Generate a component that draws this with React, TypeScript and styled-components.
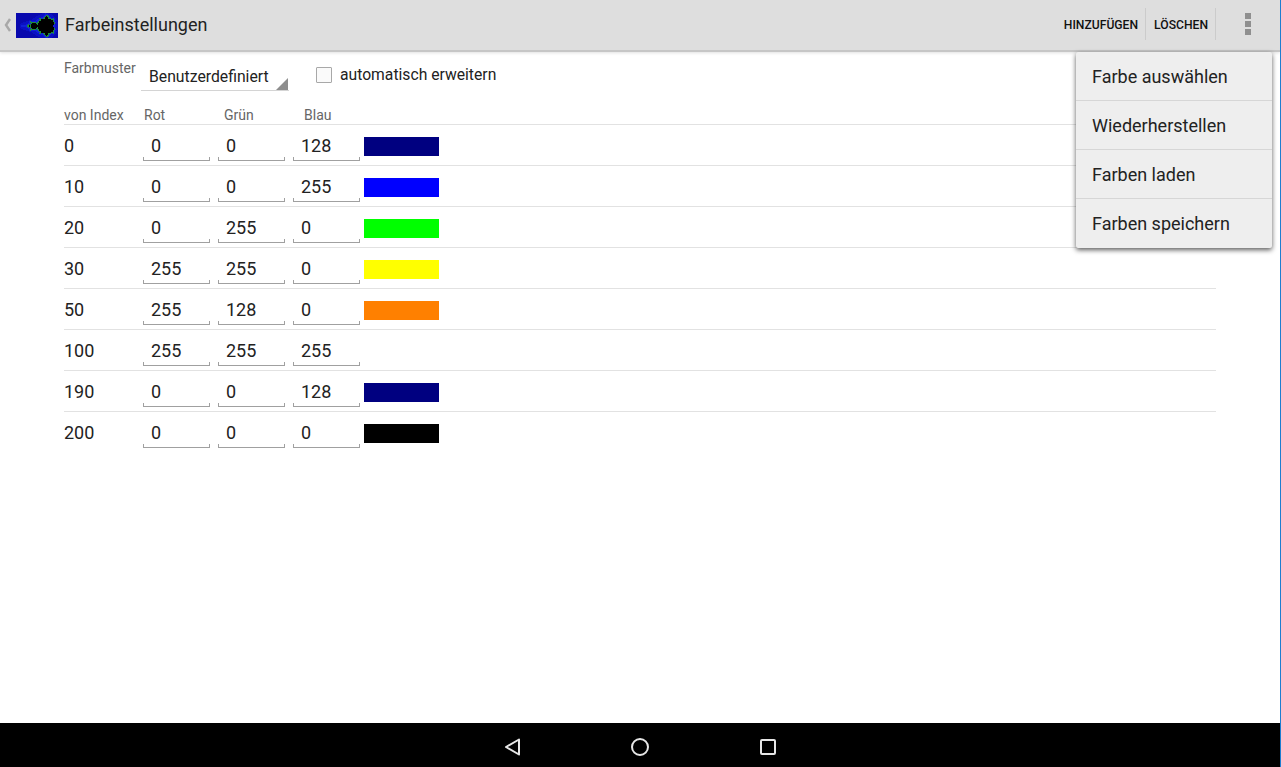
import React, { useMemo } from "react";
import styled, { createGlobalStyle } from "styled-components";

const Global = createGlobalStyle`
  html, body { margin: 0; padding: 0; background: #fff; }
  body { font-family: Roboto, "Liberation Sans", sans-serif; color: #1a1a1a; }
  * { box-sizing: border-box; }
`;

const Screen = styled.div`
  position: relative;
  width: 1281px;
  height: 767px;
  display: flex;
  flex-direction: column;
  overflow: hidden;
  background: #fff;
  border-right: 1px solid #1e7ed0;
`;

const ActionBar = styled.header`
  position: relative;
  height: 52px;
  flex: none;
  display: flex;
  align-items: center;
  background: #dedede;
  border-bottom: 2px solid #c6c6c6;
  box-shadow: 0 1px 3px rgba(0, 0, 0, 0.12);
`;

const Caret = styled.svg`
  width: 8px;
  height: 14px;
  margin-left: 4px;
  margin-right: 4px;
`;

const Logo = styled.svg`
  width: 42px;
  height: 25px;
  display: block;
`;

const Title = styled.h1`
  margin: -2px 0 0 7px;
  font-size: 18px;
  font-weight: 400;
  color: #222;
  flex: 1;
`;

const ActionButton = styled.div`
  height: 32px;
  margin-top: -2px;
  display: flex;
  align-items: center;
  padding: 2px 7px 0 8px;
  font-size: 12.15px;
  font-weight: 500;
  color: #111;
  border-right: 1px solid #cbcbcb;
  white-space: nowrap;
`;

const Overflow = styled.div`
  width: 64px;
  margin-top: -2px;
  display: flex;
  flex-direction: column;
  align-items: center;
  gap: 2px;
`;

const Dot = styled.span`
  width: 6px;
  height: 6px;
  background: #8f8f8f;
`;

const Content = styled.main`
  flex: 1;
  padding: 0 64px 0 64px;
`;

const PatternRow = styled.div`
  height: 53px;
  padding-top: 2px;
  display: flex;
  align-items: flex-start;
`;

const PatternLabel = styled.label`
  width: 77px;
  margin-top: 6px;
  font-size: 14px;
  color: #666;
  white-space: nowrap;
`;

const Spinner = styled.div`
  position: relative;
  width: 148px;
  height: 37px;
  padding: 13px 0 0 8px;
  font-size: 15.75px;
  color: #222;
  border-bottom: 1px solid #d4d4d4;
`;

const SpinnerCorner = styled.span`
  position: absolute;
  right: 1px;
  bottom: 0;
  width: 0;
  height: 0;
  border-style: solid;
  border-width: 0 0 12px 12px;
  border-color: transparent transparent #8e8e8e transparent;
`;

const CheckField = styled.label`
  display: flex;
  align-items: center;
  margin: 11px 0 0 27px;
  font-size: 15.7px;
  color: #222;
`;

const CheckBox = styled.span`
  width: 16px;
  height: 16px;
  margin-right: 8px;
  border: 1px solid #a8a8a8;
  border-radius: 1px;
  background: #fafafa;
`;

const Header = styled.div`
  height: 20px;
  padding-top: 2px;
  display: flex;
  align-items: flex-start;
  font-size: 14px;
  color: #666;
  border-bottom: 1px solid #e2e2e2;
`;

const HeaderCell = styled.span<{ $w: number }>`
  width: ${(p) => p.$w}px;
`;

const Row = styled.div<{ $last?: boolean }>`
  height: 41px;
  display: flex;
  align-items: flex-start;
  border-bottom: 1px solid ${(p) => (p.$last ? "transparent" : "#e2e2e2")};
`;

const IndexCell = styled.div`
  width: 79px;
  padding-top: 10px;
  font-size: 18px;
  color: #222;
`;

const Field = styled.div`
  position: relative;
  width: 67px;
  height: 36px;
  margin-right: 8px;
  padding: 10px 0 0 8px;
  font-size: 18px;
  color: #222;
  border-bottom: 1px solid #a0a0a0;
  &::before,
  &::after {
    content: "";
    position: absolute;
    bottom: 0;
    width: 1px;
    height: 3px;
    background: #a0a0a0;
  }
  &::before { left: 0; }
  &::after { right: 0; }
`;

const Swatch = styled.div<{ $c: string }>`
  width: 75px;
  height: 19px;
  margin: 12px 0 0 -4px;
  background: ${(p) => p.$c};
`;

const Menu = styled.ul`
  position: absolute;
  top: 52px;
  left: 1076px;
  width: 196px;
  margin: 0;
  padding: 0;
  list-style: none;
  background: #eeeeee;
  border-radius: 2px;
  box-shadow: 0 2px 5px rgba(0, 0, 0, 0.65);
`;

const MenuItem = styled.li`
  height: 49px;
  display: flex;
  align-items: center;
  padding-left: 16px;
  font-size: 18px;
  color: #222;
  border-bottom: 1px solid #d6d6d6;
  &:last-child { border-bottom: none; }
`;

const NavBar = styled.nav`
  height: 44px;
  flex: none;
  display: flex;
  align-items: center;
  justify-content: center;
  gap: 108px;
  padding-top: 4px;
  background: #000;
`;

const NavIcon = styled.svg`
  width: 20px;
  height: 20px;
  fill: none;
  stroke: #e6e6e6;
  stroke-width: 2;
`;

const rows = [
  { i: "0", r: "0", g: "0", b: "128", c: "#000080" },
  { i: "10", r: "0", g: "0", b: "255", c: "#0000ff" },
  { i: "20", r: "0", g: "255", b: "0", c: "#00ff00" },
  { i: "30", r: "255", g: "255", b: "0", c: "#ffff00" },
  { i: "50", r: "255", g: "128", b: "0", c: "#ff8000" },
  { i: "100", r: "255", g: "255", b: "255", c: "#ffffff" },
  { i: "190", r: "0", g: "0", b: "128", c: "#000080" },
  { i: "200", r: "0", g: "0", b: "0", c: "#000000" },
];

function fractalColor(re: number, im: number): string {
  let x = 0;
  let y = 0;
  let n = 0;
  while (n < 60 && x * x + y * y < 4) {
    const t = x * x - y * y + re;
    y = 2 * x * y + im;
    x = t;
    n++;
  }
  if (n >= 60) return "#000000";
  if (n >= 10) return "#1c8c3c";
  if (n >= 6) return "#1020d8";
  if (n >= 4) return "#0a10c4";
  return "#0808ae";
}

function MandelbrotLogo() {
  const cells = useMemo(() => {
    const out: { x: number; y: number; c: string }[] = [];
    for (let y = 0; y < 25; y++) {
      for (let x = 0; x < 42; x++) {
        out.push({ x, y, c: fractalColor((x + 0.5 - 4) / 14.2 - 2, (y + 0.5 - 13) / 11) });
      }
    }
    return out;
  }, []);
  return (
    <Logo viewBox="0 0 42 25" shapeRendering="crispEdges">
      {cells.map((p, i) => (
        <rect key={i} x={p.x} y={p.y} width="1" height="1" fill={p.c} />
      ))}
    </Logo>
  );
}

export default function App() {
  return (
    <Screen>
      <Global />
      <ActionBar>
        <Caret viewBox="0 0 8 14">
          <path d="M6 1 L2 7 L6 13" fill="none" stroke="#a8a8a8" strokeWidth="2.4" />
        </Caret>
        <MandelbrotLogo />
        <Title>Farbeinstellungen</Title>
        <ActionButton>HINZUFÜGEN</ActionButton>
        <ActionButton>LÖSCHEN</ActionButton>
        <Overflow>
          <Dot />
          <Dot />
          <Dot />
        </Overflow>
      </ActionBar>
      <Content>
        <PatternRow>
          <PatternLabel>Farbmuster</PatternLabel>
          <Spinner>
            Benutzerdefiniert
            <SpinnerCorner />
          </Spinner>
          <CheckField>
            <CheckBox />
            automatisch erweitern
          </CheckField>
        </PatternRow>
        <Header>
          <HeaderCell $w={80}>von Index</HeaderCell>
          <HeaderCell $w={80}>Rot</HeaderCell>
          <HeaderCell $w={80}>Grün</HeaderCell>
          <HeaderCell $w={60}>Blau</HeaderCell>
        </Header>
        {rows.map((r, n) => (
          <Row key={n} $last={n === rows.length - 1}>
            <IndexCell>{r.i}</IndexCell>
            <Field>{r.r}</Field>
            <Field>{r.g}</Field>
            <Field>{r.b}</Field>
            <Swatch $c={r.c} />
          </Row>
        ))}
      </Content>
      <NavBar>
        <NavIcon viewBox="0 0 20 20">
          <path d="M17 2.5 L4 10 L17 17.5 Z" strokeLinejoin="round" />
        </NavIcon>
        <NavIcon viewBox="0 0 20 20">
          <circle cx="10" cy="10" r="8" />
        </NavIcon>
        <NavIcon viewBox="0 0 20 20">
          <rect x="3" y="3" width="14" height="14" rx="1" />
        </NavIcon>
      </NavBar>
      <Menu>
        <MenuItem>Farbe auswählen</MenuItem>
        <MenuItem>Wiederherstellen</MenuItem>
        <MenuItem>Farben laden</MenuItem>
        <MenuItem>Farben speichern</MenuItem>
      </Menu>
    </Screen>
  );
}
